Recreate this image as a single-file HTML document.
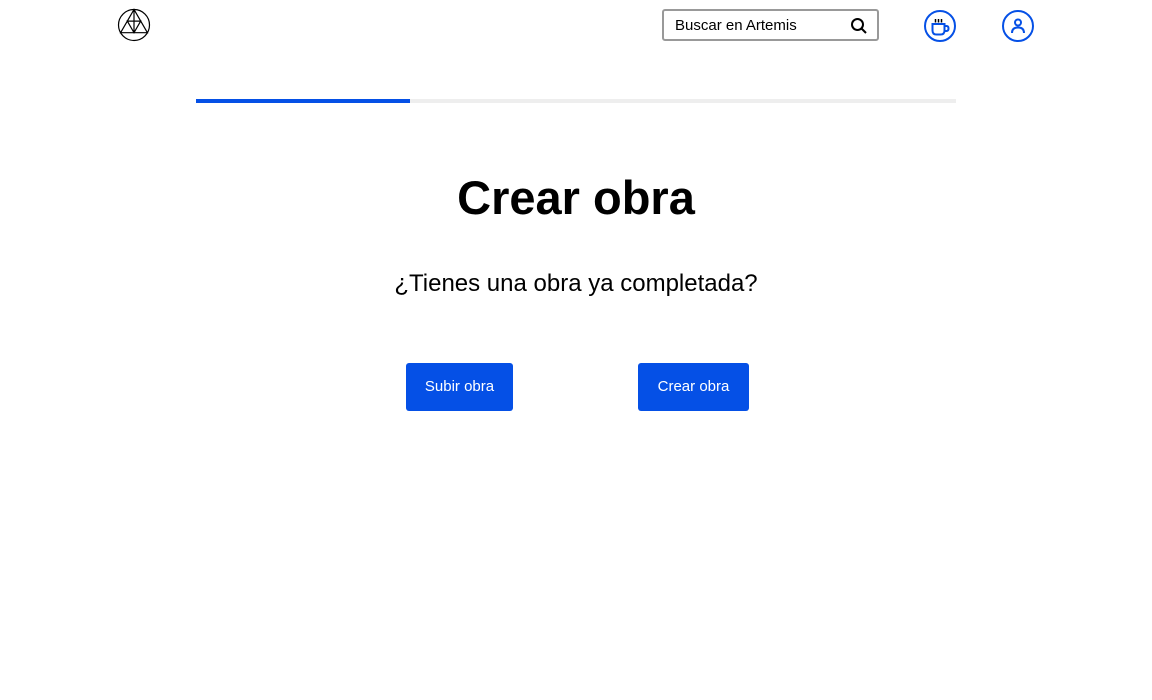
<!DOCTYPE html>
<html><head><meta charset="utf-8"><style>
*{margin:0;padding:0;box-sizing:border-box}
body{width:1152px;height:700px;background:#fff;font-family:"Liberation Sans",sans-serif;position:relative;overflow:hidden;color:#000}
.abs{position:absolute}
.search{left:662px;top:9px;width:217px;height:32px;border:2px solid #999;border-radius:3px}
.search span{position:absolute;left:11px;top:6px;font-size:15px}
.bar{left:196px;top:99px;width:760px;height:4px;background:#eee}
.bar div{width:214px;height:4px;background:#0550e6}
h1{position:absolute;left:0;width:1152px;top:170px;text-align:center;font-size:47px;font-weight:bold}
.q{left:0;width:1152px;top:270px;text-align:center;font-size:24px;letter-spacing:0}
.btn{background:#0550e6;color:#fff;font-size:15px;border-radius:3px;height:48px;line-height:48px;text-align:center}
</style></head><body>
<svg class="abs" style="left:117px;top:8px" width="34" height="34" viewBox="0 0 34 34" fill="none" stroke="#000" stroke-width="1.2">
<circle cx="17" cy="17" r="15.5"/><path d="M17 1.5 L3.6 24.7 L30.4 24.7 Z M10.3 13.1 L23.7 13.1 L17 24.7 Z M17 1.5 V24.7"/></svg>
<div class="abs search"><span>Buscar en Artemis</span>
<svg class="abs" style="left:186px;top:6px" width="18" height="18" viewBox="0 0 18 18" fill="none" stroke="#000" stroke-width="2"><circle cx="7.5" cy="7.5" r="5.5"/><path d="M11.5 11.5 L16 16"/></svg></div>
<svg class="abs" style="left:923px;top:9px" width="34" height="34" viewBox="0 0 34 34" fill="none" stroke="#0550e6" stroke-width="2">
<circle cx="17" cy="17" r="15"/><path d="M9.5 15 H21.5 V21.5 Q21.5 25.5 17.5 25.5 H13.5 Q9.5 25.5 9.5 21.5 Z M21.5 17 H23.5 Q25.5 17 25.5 19.5 Q25.5 22 23.5 22 H21.5"/><path d="M12.5 10 V13.5 M15.5 10 V13.5 M18.5 10 V13.5" stroke-width="1.5" stroke="#000"/></svg>
<svg class="abs" style="left:1001px;top:9px" width="34" height="34" viewBox="0 0 34 34" fill="none" stroke="#0550e6" stroke-width="2">
<circle cx="17" cy="17" r="15"/><circle cx="17" cy="13.5" r="3"/><path d="M11 24 Q11 18.5 17 18.5 Q23 18.5 23 24"/></svg>
<div class="abs bar"><div></div></div>
<h1>Crear obra</h1>
<div class="abs q">¿Tienes una obra ya completada?</div>
<div class="abs btn" style="left:406px;top:363px;width:107px">Subir obra</div>
<div class="abs btn" style="left:638px;top:363px;width:111px">Crear obra</div>
</body></html>
